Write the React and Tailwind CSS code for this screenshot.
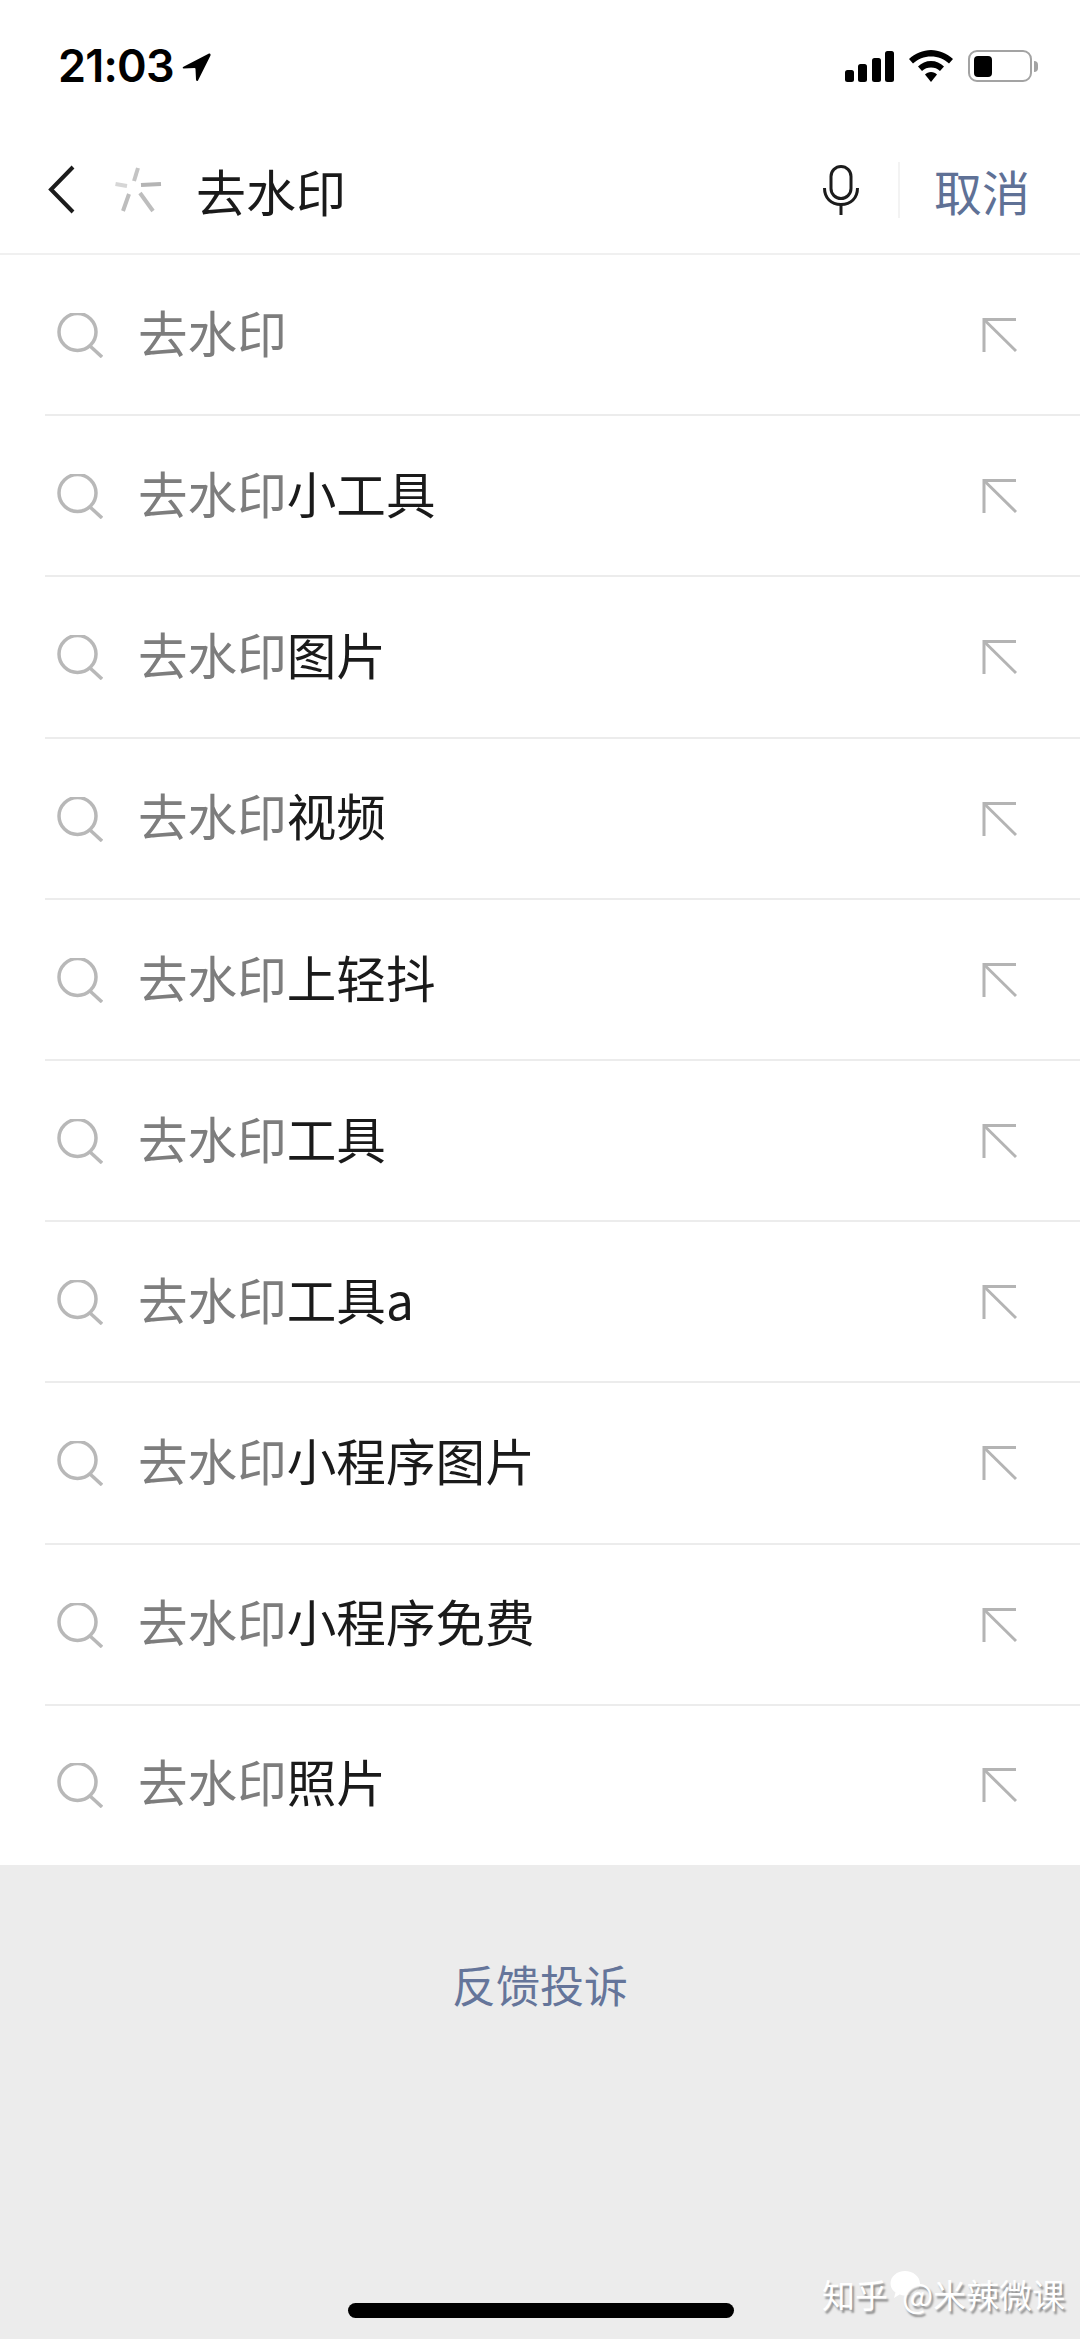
import { Fragment } from "react";

const CJK = "font-['Noto_Sans_CJK_SC','Noto_Sans',sans-serif]";

const SUGGESTIONS = ["", "小工具", "图片", "视频", "上轻抖", "工具", "工具a", "小程序图片", "小程序免费", "照片"];

const LocationArrow = () => (
  <svg width="30" height="30" viewBox="0 0 30 30" className="ml-[8px] mt-[1px]">
    <path d="M1 15 L27 1.5 Q29 1 28.5 3.5 L16 28.5 Q14.5 30 14 27.5 L13.5 17 Q13.5 16 12.5 16 L1.5 16.5 Q0 16 1 15 Z" fill="#000" />
  </svg>
);

const SignalIcon = () => (
  <svg width="49" height="31" viewBox="0 0 49 31">
    <rect x="0" y="19" width="9" height="12" rx="2.5" fill="#000" />
    <rect x="13" y="13" width="9" height="18" rx="2.5" fill="#000" />
    <rect x="27" y="7" width="9" height="24" rx="2.5" fill="#000" />
    <rect x="40" y="0" width="9" height="31" rx="2.5" fill="#000" />
  </svg>
);

const WifiIcon = () => (
  <svg width="44" height="32" viewBox="0 0 44 32">
    <path d="M22 0 C30 0 38 3.5 44 9 L40 13.5 C35 9 29 6.5 22 6.5 C15 6.5 9 9 4 13.5 L0 9 C6 3.5 14 0 22 0 Z" fill="#000" />
    <path d="M22 11 C27 11 31.5 13 35 16.5 L31 21 C28.5 18.5 25.5 17.5 22 17.5 C18.5 17.5 15.5 18.5 13 21 L9 16.5 C12.5 13 17 11 22 11 Z" fill="#000" />
    <path d="M22 22 C24.5 22 26.5 23 28 24.5 L22 32 L16 24.5 C17.5 23 19.5 22 22 22 Z" fill="#000" />
  </svg>
);

const BatteryIcon = () => (
  <div className="flex items-center">
    <div className="flex h-[32px] w-[64px] items-center rounded-[9px] border-[2.5px] border-[#a3a3a3] pl-[4px]">
      <div className="h-[21px] w-[18px] rounded-[4px] bg-black" />
    </div>
    <div className="ml-[2px] h-[11px] w-[4px] rounded-r-full bg-[#a3a3a3]" />
  </div>
);

const StatusBar = () => (
  <div className="flex h-[88px] items-start justify-between pl-[58px] pr-[42px] pt-[50px]">
    <div className="flex items-center">
      <span className="font-['Inter',sans-serif] text-[45px] font-semibold leading-[32px] tracking-[-0.8px] text-black">21:03</span>
      <LocationArrow />
    </div>
    <div className="flex items-center">
      <SignalIcon />
      <div className="mx-[15px]">
        <WifiIcon />
      </div>
      <BatteryIcon />
    </div>
  </div>
);

const BackIcon = () => (
  <svg width="28" height="50" viewBox="0 0 28 50" fill="none">
    <path d="M25 2 L3 24.5 L25 47" stroke="#1c1c1c" strokeWidth="4" />
  </svg>
);

const Spinner = () => (
  <svg width="48" height="46" viewBox="114 169 48 46" fill="none" strokeWidth="4">
    <path d="M138 170 L134 183" stroke="#c4c4c4" />
    <path d="M161 186 L141 187" stroke="#b4b4b4" />
    <path d="M115.5 186 L127 188" stroke="#d6d6d6" />
    <path d="M129 196 L123 213" stroke="#bdbdbd" />
    <path d="M140 195 L153 213" stroke="#bdbdbd" />
  </svg>
);

const MicIcon = () => (
  <svg width="36" height="50" viewBox="0 0 36 50" fill="none" stroke="#1c1c1c" strokeWidth="3">
    <rect x="8" y="1.5" width="20" height="32" rx="10" />
    <path d="M1.5 23 C1.5 33 8 39.5 18 39.5 C28 39.5 34.5 33 34.5 23" />
    <path d="M18 39.5 L18 50" />
  </svg>
);

const SearchIcon = () => (
  <svg width="46" height="45" viewBox="0 0 46 45" fill="none" stroke="#b8b8b8" strokeWidth="3.5">
    <circle cx="20.5" cy="19" r="18.5" />
    <path d="M33 33 L45 44" />
  </svg>
);

const ArrowIcon = () => (
  <svg width="35" height="35" viewBox="0 0 35 35" fill="none" stroke="#b4b4b4" strokeWidth="3">
    <path d="M2 34 L2 1.5 L34 1.5" />
    <path d="M2 1.5 L34 33" />
  </svg>
);

const WechatBubble = () => (
  <svg width="36" height="32" viewBox="0 0 36 32" className="absolute left-[68px] top-[-8px]">
    <path d="M15 1 C23 1 30 6.5 30 13.5 C30 20 23 25.5 15 25.5 C13 25.5 11 25 9.5 24.5 L4 28 L5.5 22.5 C2 20 0.5 17 0.5 13.5 C0.5 6.5 7 1 15 1 Z" fill="#fff" />
  </svg>
);

const Header = () => (
  <div className="flex h-[167px] items-center border-b-2 border-[#f0f0f0] pt-[38px]">
    <div className="ml-[48px]">
      <BackIcon />
    </div>
    <div className="ml-[38px]">
      <Spinner />
    </div>
    <span className={`${CJK} ml-[34px] flex-1 text-[50px] leading-none text-[#1a1a1a]`}>去水印</span>
    <MicIcon />
    <div className="ml-[39px] h-[56px] w-[2px] bg-[#f3f3f3]" />
    <span className={`${CJK} ml-[34px] mr-[50px] text-[48px] leading-none text-[#5f7196]`}>取消</span>
  </div>
);

const SuggestionRow = ({ suffix, last }) => (
  <div className={`relative flex items-center pl-[57px] pr-[63px] ${last ? "h-[159px]" : "h-[161.2px]"}`}>
    <SearchIcon />
    <span className={`${CJK} ml-[35px] flex-1 pb-[8px] text-[49.6px] leading-none text-[#1a1a1a]`}>
      <span className="text-[#7d7d7d]">去水印</span>
      {suffix}
    </span>
    <ArrowIcon />
    {!last && <div className="absolute bottom-0 left-[45px] right-0 h-[2px] bg-[#ececec]" />}
  </div>
);

const Watermark = () => (
  <div className={`${CJK} absolute bottom-[28px] left-[822px] flex items-center text-[33px] leading-none text-white [text-shadow:2px_3px_2px_rgba(0,0,0,0.4)]`}>
    <WechatBubble />
    <span>知乎</span>
    <span className="relative ml-[14px]">@米辣微课</span>
  </div>
);

export default function App() {
  return (
    <div className="relative flex h-[2339px] w-[1080px] flex-col overflow-hidden bg-white">
      <StatusBar />
      <Header />
      <div>
        {SUGGESTIONS.map((suffix, i) => (
          <Fragment key={i}>
            <SuggestionRow suffix={suffix} last={i === SUGGESTIONS.length - 1} />
          </Fragment>
        ))}
      </div>
      <div className="flex flex-1 flex-col items-center bg-[#ececec] pt-[93px]">
        <span className={`${CJK} text-[44px] leading-[52px] text-[#65759a]`}>反馈投诉</span>
      </div>
      <div className="absolute bottom-[21px] left-[348px] h-[15px] w-[386px] rounded-full bg-black" />
      <Watermark />
    </div>
  );
}
